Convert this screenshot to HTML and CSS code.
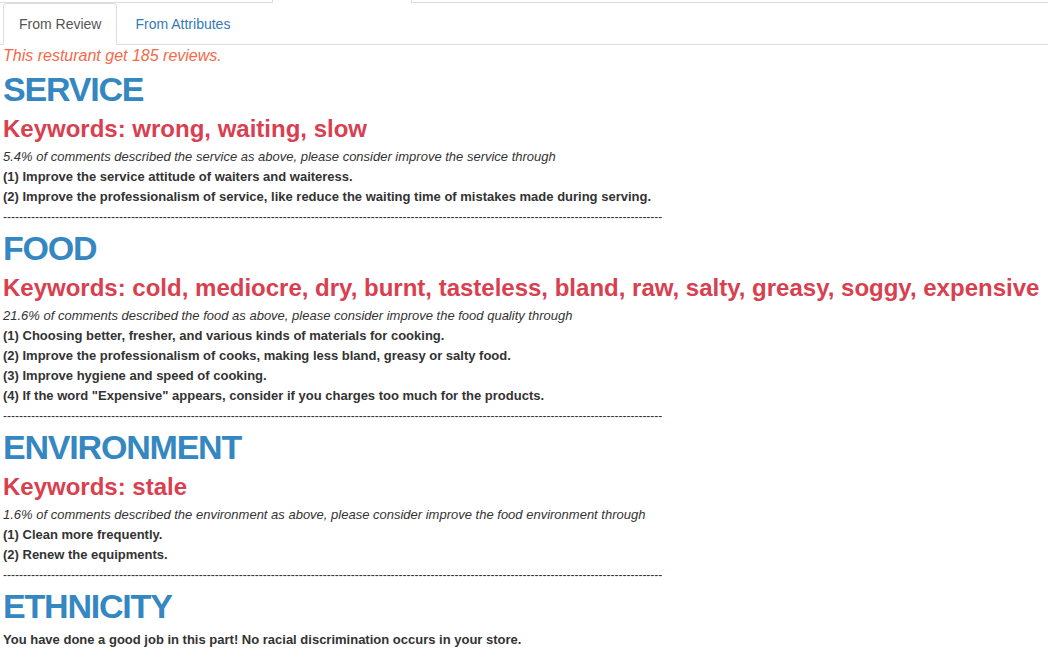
FILE: index.html
```html
<!DOCTYPE html>
<html lang="en">
<head>
<meta charset="utf-8">
<title>Review Analysis</title>
<link rel="stylesheet" href="styles.css">
</head>
<body>
<div class="topbar">
  <div class="seg seg-left"></div>
  <div class="seg seg-tab"></div>
  <div class="seg seg-right"></div>
</div>
<div class="page">
  <ul class="tabs">
    <li class="tab active"><a href="#">From Review</a></li>
    <li class="tab"><a href="#">From Attributes</a></li>
  </ul>
  <p class="count">This resturant get 185 reviews.</p>

  <section class="aspect">
    <h1 class="aspect-title">SERVICE</h1>
    <h3 class="keywords">Keywords: wrong, waiting, slow</h3>
    <p class="note">5.4% of comments described the service as above, please consider improve the service through</p>
    <p class="tip">(1) Improve the service attitude of waiters and waiteress.</p>
    <p class="tip">(2) Improve the professionalism of service, like reduce the waiting time of mistakes made during serving.</p>
    <p class="divider">---------------------------------------------------------------------------------------------------------------------------------------------------------------------</p>
  </section>

  <section class="aspect">
    <h1 class="aspect-title">FOOD</h1>
    <h3 class="keywords">Keywords: cold, mediocre, dry, burnt, tasteless, bland, raw, salty, greasy, soggy, expensive</h3>
    <p class="note">21.6% of comments described the food as above, please consider improve the food quality through</p>
    <p class="tip">(1) Choosing better, fresher, and various kinds of materials for cooking.</p>
    <p class="tip">(2) Improve the professionalism of cooks, making less bland, greasy or salty food.</p>
    <p class="tip">(3) Improve hygiene and speed of cooking.</p>
    <p class="tip">(4) If the word "Expensive" appears, consider if you charges too much for the products.</p>
    <p class="divider">---------------------------------------------------------------------------------------------------------------------------------------------------------------------</p>
  </section>

  <section class="aspect">
    <h1 class="aspect-title">ENVIRONMENT</h1>
    <h3 class="keywords">Keywords: stale</h3>
    <p class="note">1.6% of comments described the environment as above, please consider improve the food environment through</p>
    <p class="tip">(1) Clean more frequently.</p>
    <p class="tip">(2) Renew the equipments.</p>
    <p class="divider">---------------------------------------------------------------------------------------------------------------------------------------------------------------------</p>
  </section>

  <section class="aspect">
    <h1 class="aspect-title">ETHNICITY</h1>
    <p class="tip final">You have done a good job in this part! No racial discrimination occurs in your store.</p>
  </section>
</div>
</body>
</html>
```

FILE: styles.css
```css
html, body {
  margin: 0;
  padding: 0;
  background: #fff;
}

body {
  font-family: "Liberation Sans", Arial, Helvetica, sans-serif;
  font-size: 14px;
  color: #333;
  line-height: 1.42857;
}

.topbar {
  display: flex;
  height: 3px;
}

.seg {
  box-sizing: border-box;
  height: 3px;
}

.seg-left {
  width: 272px;
  border-bottom: 1px solid #ddd;
}

.seg-tab {
  width: 140px;
  border-left: 1px solid #ddd;
  border-right: 1px solid #ddd;
}

.seg-right {
  flex: 1;
  border-bottom: 1px solid #ddd;
}

.page {
  padding: 0 0 0 3px;
}

.tabs {
  list-style: none;
  display: flex;
  margin: 0 0 0 -3px;
  padding: 0 0 0 3px;
  border-bottom: 1px solid #ddd;
}

.tab {
  margin-bottom: -1px;
  margin-right: 2px;
}

.tab a {
  display: block;
  padding: 10px 15px;
  line-height: 20px;
  font-size: 14px;
  color: #337ab7;
  text-decoration: none;
  border: 1px solid transparent;
  border-radius: 4px 4px 0 0;
}

.tab.active a {
  color: #555;
  background: #fff;
  border-color: #ddd;
  border-bottom-color: transparent;
}

.count {
  margin: 2px 0 0;
  font-size: 16px;
  line-height: 17.6px;
  font-style: italic;
  color: #f4694a;
}

.aspect-title {
  margin: 5px 0 0;
  font-size: 34px;
  line-height: 39.6px;
  font-weight: 700;
  letter-spacing: -1.2px;
  color: #3587c1;
}

.aspect + .aspect .aspect-title {
  margin-top: 2px;
}

.keywords {
  margin: 7px 0 4px;
  font-size: 24px;
  line-height: 26.4px;
  font-weight: 700;
  color: #d9404f;
}

.note {
  margin: 0;
  font-size: 13px;
  line-height: 20px;
  font-style: italic;
}

.tip {
  margin: 0;
  font-size: 13px;
  line-height: 20px;
  font-weight: 700;
}

.tip.final {
  margin-top: 4px;
}

.divider {
  margin: 0;
  font-size: 12px;
  line-height: 20px;
  white-space: nowrap;
  overflow: hidden;
}
```
